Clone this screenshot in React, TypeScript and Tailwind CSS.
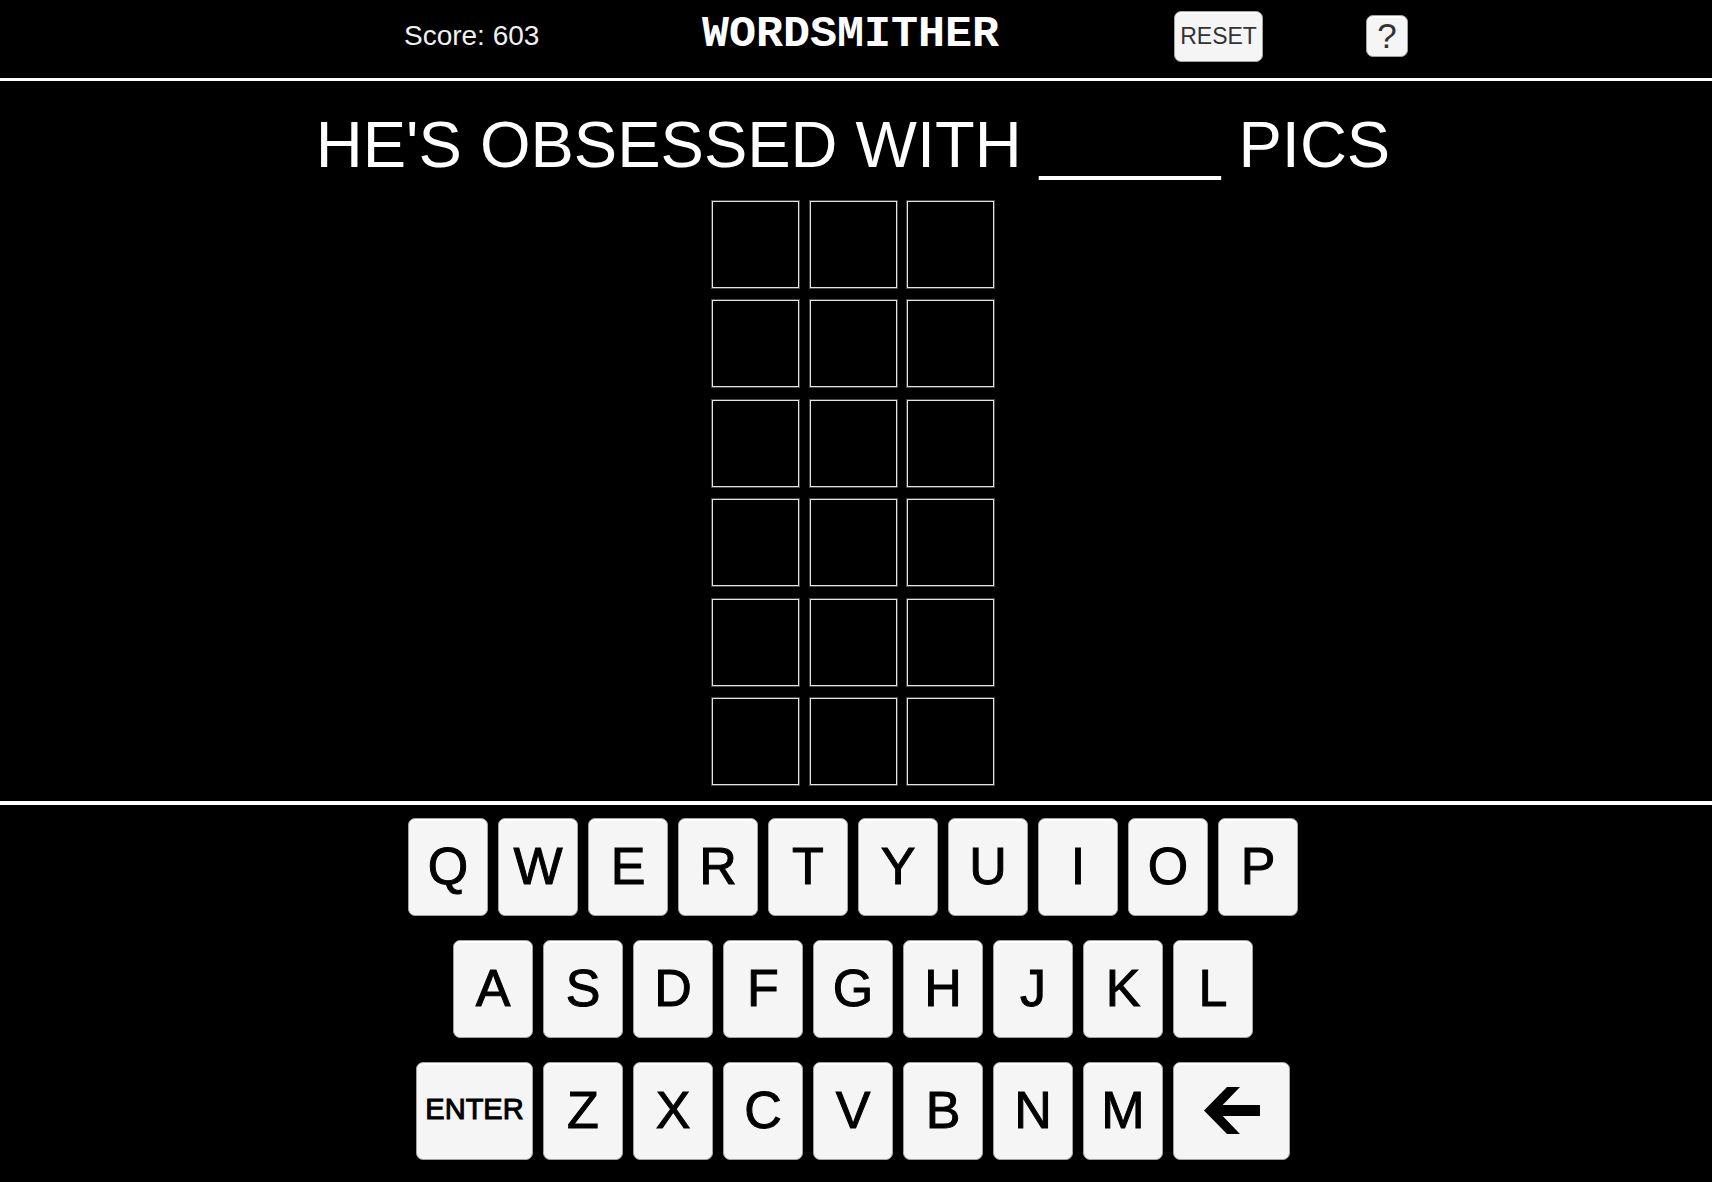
import { ReactNode, useState } from "react";

import { clsx } from "clsx";

const ROWS = 6;
const WORD_LENGTH = 3;
const KEY_ROWS = ["QWERTYUIOP", "ASDFGHJKL", "ZXCVBNM"];

type KeyProps = {
  children: ReactNode;
  wide?: boolean;
  label?: string;
  onPress: () => void;
};

function Key({ children, wide = false, label, onPress }: KeyProps) {
  return (
    <button
      type="button"
      aria-label={label}
      onClick={onPress}
      className={clsx(
        "flex h-[98px] items-center justify-center rounded-[7px] border border-[#a3a3a3] bg-[#f5f5f5] pb-[2px] text-black shadow-[inset_0_2px_0_#ffffff] [-webkit-text-stroke:1px_black]",
        wide ? "w-[117px] text-[29px]" : "w-20 text-[52px]",
      )}
    >
      {children}
    </button>
  );
}

function BackArrow() {
  return (
    <svg viewBox="0 0 168 141" className="h-[47px] w-14" fill="currentColor" aria-hidden="true">
      <path d="M0 70.5 69 0h39L56 54h112v33H56l52 54H69Z" />
    </svg>
  );
}

function Header({ score, onReset }: { score: number; onReset: () => void }) {
  return (
    <header className="flex h-[81px] items-center justify-center border-b-[3px] border-white pb-[6px] pl-[100px]">
      <p className="w-[136px] whitespace-nowrap text-[28px] leading-8 text-[#f0f0f0]">Score: {score}</p>
      <h1 className="ml-[162px] pb-[2px] font-['Liberation_Mono',monospace] text-[45px] leading-[48px] font-bold">
        WORDSMITHER
      </h1>
      <button
        type="button"
        onClick={onReset}
        className="ml-[175px] h-[51px] w-[89px] rounded-[7px] border border-[#a3a3a3] bg-[#f5f5f5] text-[23px] text-[#323232] shadow-[inset_0_2px_0_#ffffff]"
      >
        RESET
      </button>
      <button
        type="button"
        aria-label="Help"
        className="ml-[103px] h-[42px] w-[42px] rounded-[7px] border border-[#a3a3a3] bg-[#f5f5f5] text-[35px] leading-10 text-[#323232] shadow-[inset_0_2px_0_#ffffff]"
      >
        ?
      </button>
    </header>
  );
}

function Board({ guesses }: { guesses: string[] }) {
  return (
    <div className="grid h-[584px] w-[282px] grid-cols-[repeat(3,87px)] content-between justify-between">
      {Array.from({ length: ROWS * WORD_LENGTH }, (_, i) => (
        <div
          key={i}
          className="flex h-[87px] w-[87px] items-center justify-center border border-[#e4e4e4] text-[52px] shadow-[0_0_0_1px_#484848]"
        >
          {guesses[Math.floor(i / WORD_LENGTH)]?.[i % WORD_LENGTH]}
        </div>
      ))}
    </div>
  );
}

export default function App() {
  const [guesses, setGuesses] = useState<string[]>([]);
  const [current, setCurrent] = useState("");

  function type(letter: string) {
    if (current.length < WORD_LENGTH && guesses.length < ROWS) {
      setCurrent(current + letter);
    }
  }

  function submit() {
    if (current.length === WORD_LENGTH) {
      setGuesses([...guesses, current]);
      setCurrent("");
    }
  }

  function reset() {
    setGuesses([]);
    setCurrent("");
  }

  return (
    <div className="min-h-screen bg-black font-['Liberation_Sans',Arial,sans-serif] text-white">
      <Header score={603} onReset={reset} />

      <main className="flex flex-col items-center border-b-4 border-white pt-7 pr-[6px] pb-4">
        <h2 className="mb-5 text-[65px] leading-[72px]">HE'S OBSESSED WITH _____ PICS</h2>
        <Board guesses={[...guesses, current]} />
      </main>

      <div className="flex flex-col gap-6 pt-[13px] pr-[6px] pb-[22px]">
        {KEY_ROWS.map((row, i) => (
          <div key={row} className="flex justify-center gap-[10px]">
            {i === 2 ? (
              <Key wide onPress={submit}>
                ENTER
              </Key>
            ) : null}
            {row.split("").map((letter) => (
              <Key key={letter} onPress={() => type(letter)}>
                {letter}
              </Key>
            ))}
            {i === 2 ? (
              <Key wide label="Backspace" onPress={() => setCurrent(current.slice(0, -1))}>
                <BackArrow />
              </Key>
            ) : null}
          </div>
        ))}
      </div>
    </div>
  );
}
